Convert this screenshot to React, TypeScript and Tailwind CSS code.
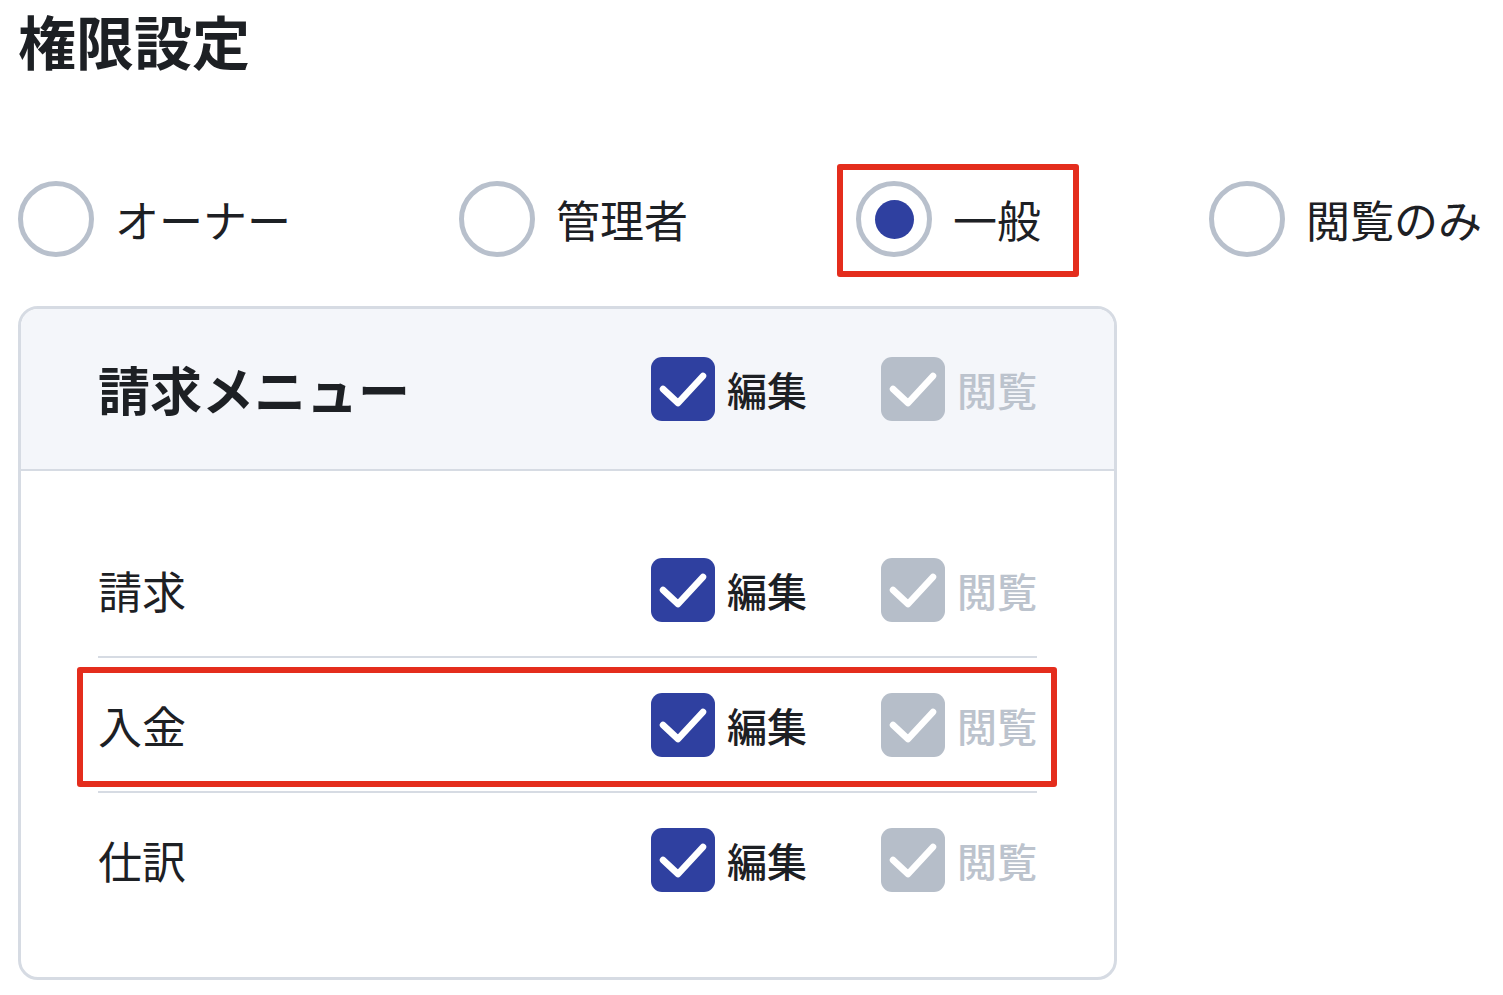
import React, { useState } from 'react';

type Role = 'owner' | 'admin' | 'general' | 'viewer';

const roles: { id: Role; label: string }[] = [
  { id: 'owner', label: 'オーナー' },
  { id: 'admin', label: '管理者' },
  { id: 'general', label: '一般' },
  { id: 'viewer', label: '閲覧のみ' },
];

const CheckIcon = () => (
  <svg viewBox="0 0 64 64" className="w-full h-full">
    <polyline
      points="12,32 27,46 52,19"
      fill="none"
      stroke="#ffffff"
      strokeWidth="6.5"
      strokeLinecap="round"
      strokeLinejoin="round"
    />
  </svg>
);

const Checkbox = ({ label, disabled = false }: { label: string; disabled?: boolean }) => (
  <div className="flex items-center gap-[12px]">
    <div
      className={`w-[64px] h-[64px] rounded-[11px] ${disabled ? 'bg-[#b6bec9]' : 'bg-[#2f40a0]'}`}
    >
      <CheckIcon />
    </div>
    <span className={`text-[40px] font-medium leading-none ${disabled ? 'text-[#bcc3cd]' : 'text-[#1d2024]'}`}>
      {label}
    </span>
  </div>
);

const PermissionControls = () => (
  <div className="flex items-center gap-[74px]">
    <Checkbox label="編集" />
    <Checkbox label="閲覧" disabled />
  </div>
);

const rows = [
  { label: '請求', highlight: false },
  { label: '入金', highlight: true },
  { label: '仕訳', highlight: false },
];

export default function App() {
  const [role, setRole] = useState<Role>('general');

  return (
    <div className="min-h-screen bg-white pl-[18px] pt-[11px] font-['Noto_Sans_CJK_JP','Noto_Sans',sans-serif] text-[#1d2024]">
      <h1 className="text-[58px] font-bold leading-none">権限設定</h1>

      {/* Role radios */}
      <div className="mt-[112px] flex items-center gap-[168px]">
        {roles.map(r => (
          <button
            key={r.id}
            onClick={() => setRole(r.id)}
            className="relative flex items-center gap-[21px] text-left"
          >
            <span className="w-[76px] h-[76px] rounded-full border-[5px] border-[#b8c0cc] flex items-center justify-center">
              {role === r.id && <span className="w-[39px] h-[39px] rounded-full bg-[#2f40a0]" />}
            </span>
            <span className="text-[44px] leading-none">{r.label}</span>
            {r.id === 'general' && (
              <span className="absolute -left-[19px] -top-[17px] -bottom-[20px] -right-[38px] border-[6px] border-[#e42d1d] rounded-[3px] pointer-events-none" />
            )}
          </button>
        ))}
      </div>

      {/* Menu card */}
      <div className="mt-[49px] w-[1099px] border-[3px] border-[#d6dbe3] rounded-[20px]">
        <div className="h-[162px] flex items-center justify-between px-[77px] bg-[#f4f6fa] border-b-2 border-[#d6dbe3] rounded-t-[17px]">
          <span className="text-[52px] font-bold leading-none">請求メニュー</span>
          <PermissionControls />
        </div>
        <div className="px-[77px] pt-[52px] pb-[51px]">
          {rows.map((row, i) => (
            <div
              key={row.label}
              className={`relative h-[133px] box-content flex items-center justify-between ${i > 0 ? 'border-t-2 border-[#d6dbe3]' : ''}`}
            >
              <span className="text-[44px] leading-none">{row.label}</span>
              <PermissionControls />
              {row.highlight && (
                <span className="absolute -left-[21px] -right-[20px] top-[9px] bottom-[4px] border-[6px] border-[#e42d1d] rounded-[3px] pointer-events-none" />
              )}
            </div>
          ))}
        </div>
      </div>
    </div>
  );
}
